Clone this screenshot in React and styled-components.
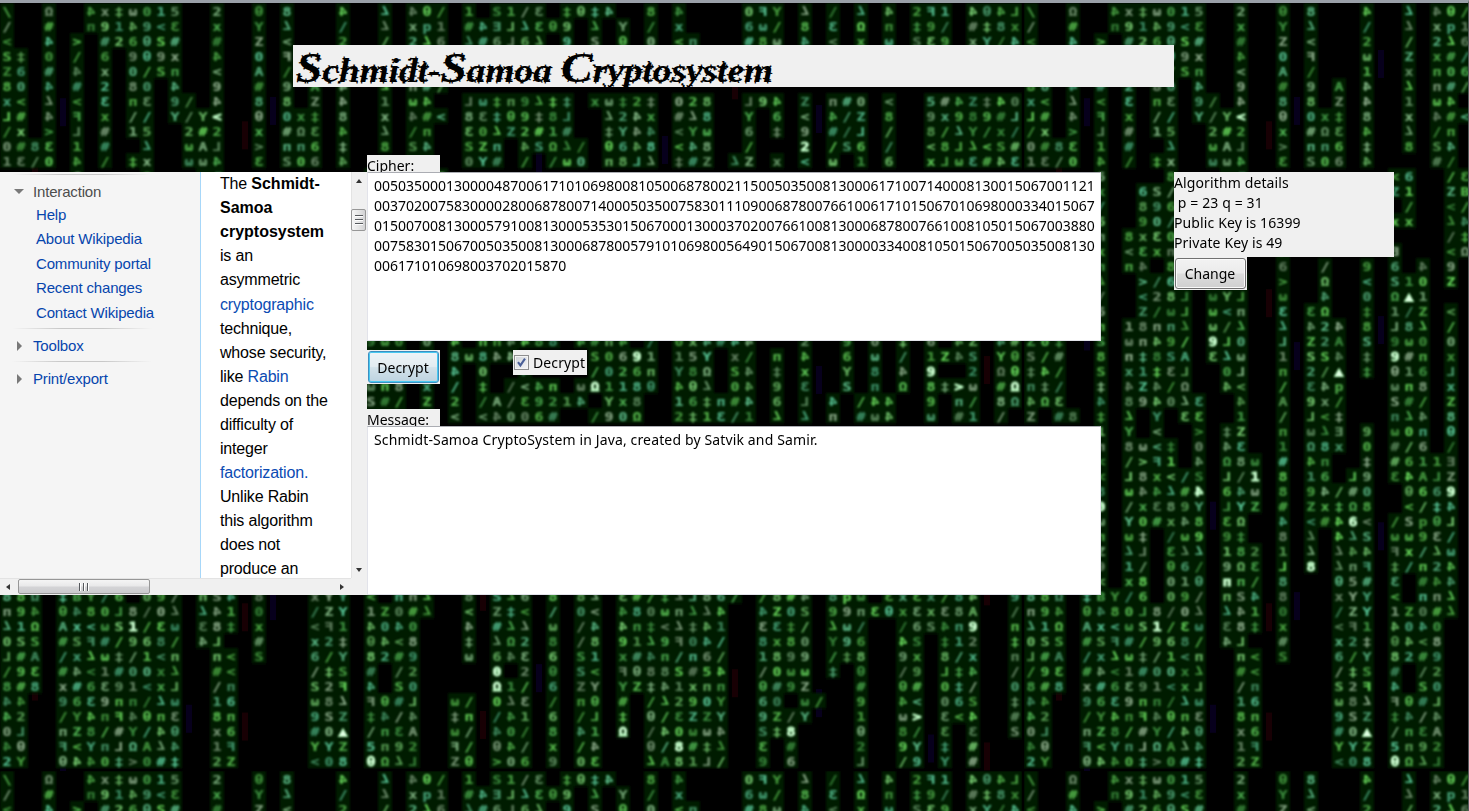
import React from 'react';
import styled, { createGlobalStyle, css } from 'styled-components';

const GlobalStyle = createGlobalStyle`
  html, body { margin: 0; padding: 0; background: #000; overflow: hidden; }
  * { box-sizing: border-box; }
`;

/* ---------- digital rain ---------- */

const PITCH_X = 14;
const PITCH_Y = 15;
const TILE_W = 1024;
const TILE_H = 768;

// One line per row; every entry is "column:glyphs", "." leaves a cell dark,
// "?" lets the cell choose its own glyph.
const RAIN = [
  '0:\\ 3:D 6:4x+o015 15:2 18:@ 20:8 24:4 27:7 29:4@/ 33:1 35:S1/3 40:+@+4 46:8 48:4 53:0FY 57:7 59:/ 61:7 63:4 65:2F1 69:4@4L',
  '0:/ 3:# 6:n9149<3 15:x 18:Y 20:7 24:/ 27:7 29:xq1 33:#4EL73@9 42:7 44:Y 46:/ 48:x 53:6o/ 57:8 59:3 61:D 63:n 65:+9/ 69:#+8x',
  '0:< 3:4 5:> 7:#26@S# 15:# 18:Z 20:< 24:2 27:/ 29:276 33:7#6L67 40:9 42:S 44:@ 46:0 48:<n 53:#8o 57:4 59:< 61:x 63:o 65:S39 69:xY/4',
  '0:S+.0./ 7:6 9:9@9x 15:4 18:0 20:F 24:? 27:? 29:???',
  '0:Z6.#.4 7:x 9:0/Sn 15:< 18:A 20:/ 24:? 27:? 29:???',
  '0:80.4.# 7:2 9:80.4 15:9 18:# 20:9.A 24:4 27:7 29:n#/',
  '0:x<.7.< 7:3 9:n3.9/ 15:4 18:8 20:8.Z.4..1 29:o4 33:Lo+n97++ 42:xo+2+ 48:028 53:L94 57:Z 59:n#0 63:< 66:5#4Z+40',
  '0:L#.4.F 7:x 9://.Y/Y< 18:@ 20:0x+.8..x 29:4#< 33:83+@9+8L 43:724x 48:#78 53:Y.6 57:< 59:4/Z 63:8 66:9x989#L',
  '0:/x.>.L 7:# 9:15 13:2#2 18:x 20:#D3.4..7 29:/n 33:307Z2#1# 43:+Y44 48:<Yo 53:6.+ 57:9 59:#/L 63:/ 66:8/7Y/x/',
  '0:0#?3.1 7:# 10:7 13:oAL 18:> 20:nn6.+..8 29:S4 33:SZn.4SD7/ 43:@648 48:<48 53:/ 57:2 59:/S6 63:/ 66:<8L7<S#',
  '0:13?0.4 7:/ 9:+x 13:oo4 18:3 20:S06.4 29:#/ 33:0Y#./ 39:/o0 43:n8L7 48:+#Z 52:7Z.x.< 59:o.1.6 66:xLo3#43',
  '5:? 10:8 14:?? 26:?6 30:/3',
  '5:? 8:??/ 14:?? 26:Z1 30:ZB',
  '5:? 8:??6 14:?? 26:./ 30:</',
  '5:? 8:??/ 14:?? 26:xx 30:74',
  '5:? 7:???0 18:? 26:. 30:/+',
  '5:? 7:???n? 18:4 26:E 30:<D',
  '5:? 7:??.8 18:6 21:/ 24:9 26:6.? 30:9',
  '5:? 8:>?? 13:??? 18:> 21:D 24:< 26:S10 30:Z',
  '5:? 8:<28L 13:oYL 18:o 21:4 24:0 26:D^1',
  '5:? 8:Z/oL 13:o<n 18:3 20:3D 24:+ 26:1/Z 30:<',
  '5:? 7:18nn7 13:o/7 18:7 20:424 24:8 26:L87 30:/',
  '0:??? 5:? 7:on49/ 13:9L0 18:L 20:Z2A 24:S 26:9o0 30:0 32:4.nn4488 41:4#n4 46:/ 48:0x4# 52:44 57:2 60:9 62:0 64:+ 66:6.4Z 71:4#',
  '0:S/# 5:8 7:n+8SA 13:37o 18:1 20:SS4 24:+ 26:9#n 30:x 32:8o844 42:S0691 48:15Y 52:x/ 55:? 57:4 60:6 62:o 64:/ 66:1Z?S 71:Y@',
  '0:+4/ 5:S 7:x1+3L 14:0L 18:n 20:2/^ 24:+ 26:@16 30:L 32:4.0..4 42:/026n 48:Y8D 52:S4 55:+ 57:x 60:Y 62:8 64:4 66:9..2 71:D@',
  '0:n+/ 5:+ 7:4Z4/D 14:4< 18:/ 20:34q 26:on8 30:x 32:/.+ 36:/<4n 41:oD118@ 48:4@7.04.9 57:3 60:S 62:n 64:D 66:8+>o 71:#D',
  '0:4D3 5:4 7:894073 15:4 18:A 20:9x/ 26:S#/ 30:Z 32:2./A/3921 41:4 43:Yx8 48:16+n#4.6.L.4 61:/44 66:9.n/ 71:8D',
  '0:Z.#8 5:+ 7:7.Y.33 15:1 18:/ 20:L<+ 26:n74 30:8 32:<.<4006# 42:/90D 48:2+13/1.7.7.n.#o4 66:o.#1 71:/',
  '5:? 7:Y.<..> 14:+Z 18:n 20:o7E 24:9 26:o0n 30:@',
  '5:? 7:8o<+.0 14:43 18:1 20:D8x 24:0 26:#/6 30:/',
  '5:? 7:/>F1.4 14:D8o 18:# 20:4n 24:+ 26:#611E',
  '5:? 7:L8x</S 14:L/1 18:8 20:16.L9 26:34ALZ',
  '5:? 7:o447#4 14:64o 18:8 20:94/#0 27:@669',
  '5:0 7:/x389Y 14:LYZ 18:# 20:Zx+D8 27:</+4',
  '5:? 7:Y0#x48 14:3D 18:4 20:<#46< 26:/Sq@L',
  '5:? 7:o+./o9 14:9+ 18:8 20:7.47S 26:oo93/',
  '5:? 7:7L.377 14:182 18:1 20:7 22:744 26:Fx/7o',
  '5:? 7:1/.@6/ 14:9D3 18:L 20:8 22:7nF 26:+/n24',
  '5:< 7:x8.01@ 14:nn/ 18:8 22:@5# 26:3.#44',
  '0:88D 4:+BY/6.09/ 14:nS4 18:8 22:xYY 26:<.nn7 33:8.S76 39:8 41:87 44:3#/+7L86/ 54:/8#4 59:8qo.3x3x/8 69:4 72:9',
  '0:n94 4:@480L8/07 14:741 18:0 22:/ZY 26:1Z0#7 33:<.Z+< 39:/ 41:0< 44:480on774 54:4Z0S 59:99n3@x3x38A 72:/',
  '0:71D 4:Ax<oS1/3o 14:38+ 18:x 22:<F1 26:4040 33:4.#77 39:o 41:/4 44:4n+<7+41 54:33+/ 59:7o/ 64:/6S4n9 72:n',
  '0:0SS 4:#SF#/968/ 14:4L 18:# 22:x2+ 26:@4<8 33:+.7D2 39:8 41:/8 44:9179F04/ 54:8x80 59:Y96 64:4S.+12 72:+',
  '0:L#A 4:/x7o+/1<n 15:n< 18:S 22:6/Y 26:82#9 33:o.643 39:6 41:S1 44:x#4n/n6/ 54:1899 59:/+8 64:9x.8/x 72:n',
  '0:/93 4:#4<1#00x7 15:#< 22:/+S 26:#./2 35:0.2 39:@ 41:S< 44:F@88S#54 54:/0oo 59:+.@ 64:/9.L+4 72:/',
  '0:8#8 4:x#6391<xL 15:/n 22:S2F 26:4.S0 35:D1/ 39:6 41:ZY 44:YZ+41xnn 54:@#9Z 61:# 64:@#.0+/ 72:0',
  '0:44 4:9639nn/7o 15:16 22:o87 26:F@#L 32:o/.073 39:/ 41:n@ 44:#./7290Y 54:60.o/ 61:9 64:4<.06S 72:+',
  '0:42 4:/Y4nF4@n3 15:8n 22:9SZ 26:+4/4 32:+n./41 39:6 41:/L 44:+.@/3ZZY 54:9Z/Y 61:1 64:o>.3<4 72:#',
  '0:0L 4:nZ8/#Y/4@ 15:x6 22:#0^ 26:/n3A 32:o/.40/ 39:8 41:41 44:D./40oo4 54:S+8 61:@ 64:8/.3.3 72:S',
  '0:4@ 4:F<YnLDA74 15:1F 22:YYZ 26:5n92 32:F/.@4/ 39:x 41:/4 46:@/8#+7 54:3.# 61:2 64:9Y.+.#',
  '0:2Y 4:@440+>0#+ 15:2Z 22:<08 26:@D7L 32:Z@.>06 39:9 41:03 46:7A81L/ 54:9.6 61:L 64:/9.Y.#',
];

const BRIGHT = new Set([
  '27-19', '22-24', '26-23', '13-22', '12-32', '30-32', '16-31', '23-34', '14-38', '9-41', '20-37',
  '24-48', '26-50', '44-48', '48-49', '35-44', '35-45', '42-25', '45-23', '57-9', '15-7',
  '69-41', '65-47', '56-48', '68-25', '66-24', '72-25', '5-33',
]);

// Code letters of the table that stand for another sign.
const SIGNS = { '^': '▲', '@': 'θ', n: 'п', '+': '‡', o: 'ω', D: 'Ω' };

const RANDOM_GLYPHS = '4789x/+<no#Z1S603';
const MIRRORED = '34LFqE';
const COLORS = ['#5cc255', '#7fb281', '#66d45a', '#5bb887', '#8cab8a', '#4fb052', '#76c970', '#56c193'];

const noise = (a, b) => {
  let n = (a * 374761393 + b * 668265263) | 0;
  n = Math.imul(n ^ (n >>> 13), 1274126177);
  return ((n ^ (n >>> 16)) >>> 0) / 4294967296;
};

const CELLS = RAIN.flatMap((line, row) =>
  line.split(' ').flatMap((run) => {
    const cut = run.indexOf(':');
    const start = Number(run.slice(0, cut));
    return [...run.slice(cut + 1)].flatMap((ch, i) => {
      if (ch === '.') return [];
      const col = start + i;
      const r = noise(col + 3, row + 11);
      return [{
        col,
        row,
        glyph: ch === '?' ? RANDOM_GLYPHS[Math.floor(r * RANDOM_GLYPHS.length)] : ch,
        bright: BRIGHT.has(`${col}-${row}`),
        color: COLORS[Math.floor(noise(row, col) * COLORS.length)],
        opacity: 0.66 + r * 0.34,
      }];
    });
  })
);

const STREAKS = [2, 4, 13, 17, 19, 25, 34, 38, 47, 52, 58, 66, 70];

const RainLayer = styled.svg`
  position: absolute;
  inset: 0;
  width: 1468px;
  height: 808px;
  user-select: none;
`;

const Glyph = styled.text`
  font: bold 13px 'DejaVu Sans Mono', monospace;
  text-anchor: middle;
`;

const flip = (g) => {
  if (MIRRORED.includes(g)) return 'scale(-1.15,1)';
  return g === '7' ? 'scale(1.15,-1)' : 'scale(1.15,1)';
};

function Rain() {
  return (
    <RainLayer aria-hidden="true" viewBox="0 0 1468 808">
      <defs>
        <filter id="soft" x="0" y="0" width="100%" height="100%">
          <feGaussianBlur stdDeviation="0.85" />
        </filter>
        <filter id="halo" x="0" y="0" width="100%" height="100%">
          <feGaussianBlur stdDeviation="1.8" />
        </filter>
        <clipPath id="tileClip"><rect width={TILE_W} height={TILE_H} /></clipPath>
        <g id="tile" clipPath="url(#tileClip)">
          {STREAKS.map((c, i) => [3, 17, 33, 44].map((r) => (
            <rect
              key={`${c}-${r}`}
              x={c * PITCH_X + 4}
              y={(r + (noise(c, r) * 8)) * PITCH_Y}
              width="6"
              height="28"
              fill={i % 3 === 0 ? '#180004' : '#07001c'}
            />
          )))}
          <g filter="url(#halo)">
            {CELLS.map((c) => (
              <rect key={`${c.col}-${c.row}`} x={c.col * PITCH_X} y={c.row * PITCH_Y} width="14" height="15.5" fill="#001d03" />
            ))}
          </g>
          <g filter="url(#soft)">
            {CELLS.map((c) => (
              <g key={`${c.col}-${c.row}`} transform={`translate(${c.col * PITCH_X + 7},${c.row * PITCH_Y + 8})`}>
                <Glyph
                  transform={flip(c.glyph)}
                  y={c.glyph === '7' ? 5 : 4.7}
                  fill={c.bright ? '#e4ffe6' : c.color}
                  stroke={c.bright ? '#b8ffc0' : c.color}
                  strokeWidth={c.bright ? 0.8 : 0.2}
                  opacity={c.bright ? 1 : c.opacity}
                >
                  {SIGNS[c.glyph] || c.glyph}
                </Glyph>
              </g>
            ))}
          </g>
        </g>
      </defs>
      <rect width="1468" height="808" fill="#000" />
      {[0, 1].map((ty) => [0, 1].map((tx) => (
        <use key={`${tx}${ty}`} href="#tile" x={tx * TILE_W} y={ty * TILE_H} />
      )))}
    </RainLayer>
  );
}

/* ---------- window ---------- */

const UI_FONT = "'Noto Sans', 'Open Sans', sans-serif";

const Window = styled.div`
  position: relative;
  width: 1469px;
  height: 811px;
  overflow: hidden;
  background: #000;
  border-top: 3px solid #9aa0a8;
  border-right: 1px solid #55595c;
  font: 14px/20px ${UI_FONT};
  color: #000;
`;

const Content = styled.main`
  position: relative;
  display: flex;
  flex-direction: column;
  padding-top: 42px;
`;

const Title = styled.h1`
  width: 881px;
  height: 42px;
  margin: 0 0 68px 293px;
  background: #f0f0f0;
`;

const Lettering = styled.svg`
  display: block;
  width: 881px;
  height: 42px;
  text { font: italic bold 33px 'Liberation Serif', serif; }
  .cap { font-size: 42px; }
`;

const Columns = styled.div`
  display: flex;
  align-items: flex-start;
`;

/* ---------- browser pane ---------- */

const Browser = styled.section`
  display: grid;
  grid-template: 406px 17px / 351px 16px;
  width: 367px;
  margin-top: 17px;
  background: #f0f0f0;
  font-family: 'Liberation Sans', Arial, sans-serif;
`;

const Page = styled.div`
  display: flex;
  overflow: hidden;
  background: #fff;
`;

const Sidebar = styled.nav`
  width: 201px;
  padding: 2px 0 0 12px;
  background: #f5f5f5;
  border-right: 1px solid #a7d7f9;
  font-size: 15px;
  letter-spacing: -0.17px;
`;

const Rule = styled.div`
  width: 140px;
  height: 1px;
  background: linear-gradient(to right, #f5f5f5, #c8c8c8 35%, #c8c8c8 65%, #f5f5f5);
`;

const SectionHead = styled.div`
  display: flex;
  align-items: center;
  height: ${(p) => p.$height}px;
  padding-top: ${(p) => (p.$open ? 1 : 2)}px;
  color: ${(p) => (p.$open ? '#4d4d4d' : '#0645ad')};
`;

const Arrow = styled.span`
  width: 21px;
  &::before {
    content: '';
    display: block;
    width: 0;
    height: 0;
    ${(p) => (p.$open
    ? css`margin-left: 2px; border: 5px solid transparent; border-top-color: #797979; border-bottom: 0;`
    : css`margin-left: 5px; border: 5px solid transparent; border-left-color: #797979; border-right: 0;`)}
  }
`;

const Links = styled.ul`
  list-style: none;
  margin: -4px 0 0;
  padding: 0 0 3px 24px;
`;

const LinkItem = styled.li`
  height: 24.4px;
  line-height: 24.4px;
  color: #0645ad;
`;

const Article = styled.article`
  flex: 1;
  padding: 0.3px 0 0 19px;
  font-size: 16px;
  line-height: 24.04px;
  letter-spacing: -0.18px;
  white-space: pre;
  a { color: #0b4bb3; }
  b { letter-spacing: 0; }
`;

const ScrollBar = styled.div`
  display: flex;
  flex-direction: ${(p) => (p.$vertical ? 'column' : 'row')};
  align-items: center;
  background: #f0f0f0;
  ${(p) => (p.$vertical
    ? css`border-left: 1px solid #e3e3e3; padding: 7px 2px 6px 0;`
    : css`border-top: 1px solid #e3e3e3; padding: 0 7px 1px 6px;`)}
`;

const ScrollArrow = styled.i`
  border: 3px solid transparent;
  ${(p) => ({
    up: css`border-top: 0; border-bottom: 4px solid #333;`,
    down: css`border-bottom: 0; border-top: 4px solid #333; margin-top: auto;`,
    left: css`border-left: 0; border-right: 4px solid #333;`,
    right: css`border-right: 0; border-left: 4px solid #333; margin-left: auto;`,
  }[p.$dir])}
`;

const Thumb = styled.div`
  display: flex;
  flex: none;
  align-items: center;
  justify-content: center;
  gap: 2px;
  border: 1px solid #979797;
  border-radius: 2px;
  ${(p) => (p.$vertical
    ? css`
        flex-direction: column; width: 15px; height: 22px; margin-top: 26px;
        background: linear-gradient(to right, #f6f6f6, #e6e6e6 50%, #d2d2d4);
      `
    : css`
        width: 132px; height: 15px; margin-left: 8px;
        background: linear-gradient(#f5f5f5, #e8e8e9 48%, #d4d4d6 52%, #cbcbce);
      `)}
`;

const Grip = styled.span`
  ${(p) => (p.$vertical
    ? css`width: 8px; height: 2px; border-top: 1px solid #55585c; border-bottom: 1px solid #fff;`
    : css`width: 2px; height: 8px; border-left: 1px solid #55585c; border-right: 1px solid #fff;`)}
`;

const ThumbGrip = ({ $vertical }) => (
  <Thumb $vertical={$vertical}>
    {[0, 1, 2].map((i) => <Grip key={i} $vertical={$vertical} />)}
  </Thumb>
);

/* ---------- form ---------- */

const Form = styled.section`
  display: flex;
  flex-direction: column;
  width: 734px;
`;

const FieldLabel = styled.label`
  width: 73px;
  height: 17px;
  overflow: hidden;
  background: #f0f0f0;
  line-height: 22px;
`;

const TextBox = styled.div`
  height: 169px;
  padding: 3px 0 0 6px;
  background: #fff;
  border: 1px solid #e2e3ea;
  border-top-color: #abadb3;
  letter-spacing: ${(p) => p.$spacing}px;
  white-space: pre;
`;

const Actions = styled.div`
  display: flex;
  align-items: flex-start;
  height: 68px;
  padding-top: 9px;
`;

const ButtonFrame = styled.div`
  width: 73px;
  height: ${(p) => p.$height}px;
  padding: 1px;
  background: #f0f0f0;
`;

const Button = styled.button`
  display: block;
  width: 100%;
  height: 100%;
  padding: 1px 1px 0 0;
  border-radius: 3px;
  font: 14px/20px ${UI_FONT};
  color: #000;
  ${(p) => (p.$focused
    ? css`
        border: 1px solid #3c8fc1;
        box-shadow: inset 0 0 0 1px #48c8f0;
        background: linear-gradient(#eef4f8, #e3ecf1 48%, #d3e2ea 52%, #bdd3e0);
      `
    : css`
        border: 1px solid #707070;
        box-shadow: inset 0 0 0 1px #fafafa;
        background: linear-gradient(#f2f2f2, #ebebeb 48%, #dddddd 52%, #cfcfcf);
      `)}
`;

const CheckLabel = styled.div`
  display: flex;
  align-items: center;
  gap: 4px;
  width: 74px;
  height: 25px;
  padding-left: 1px;
  margin-left: 73px;
  background: #f0f0f0;
  letter-spacing: 0.1px;
`;

const CheckBox = styled.span`
  display: flex;
  flex: none;
  width: 15px;
  height: 15px;
  border: 1px solid #8e8f8f;
  background: linear-gradient(135deg, #cfd3d9, #f6f6f6);
  box-shadow: inset 0 0 0 1px #f4f4f4;
`;

const Details = styled.aside`
  margin: 17px 0 0 73px;
`;

const DetailText = styled.div`
  width: 220px;
  height: 85px;
  padding-top: 1px;
  background: #f0f0f0;
  white-space: pre;
  letter-spacing: 0.12px;
`;

const CIPHER = `005035000130000487006171010698008105006878002115005035008130006171007140008130015067001121
003702007583000028006878007140005035007583011109006878007661006171015067010698000334015067
015007008130005791008130005353015067000130003702007661008130006878007661008105015067003880
007583015067005035008130006878005791010698005649015067008130000334008105015067005035008130
006171010698003702015870`;

export default function App() {
  return (
    <Window>
      <GlobalStyle />
      <Rain />
      <Content>
        <Title>
          <Lettering viewBox="0 0 881 42">
            <text
              x="3"
              y="37"
              textLength="477"
              lengthAdjust="spacingAndGlyphs"
              fill="#000"
              stroke="#000"
              strokeWidth="3"
              strokeDasharray="1.1 5.6"
            >
              <tspan className="cap">S</tspan>chmidt-<tspan className="cap">S</tspan>amoa <tspan className="cap">C</tspan>ryptosystem
            </text>
          </Lettering>
        </Title>
        <Columns>
          <Browser>
            <Page>
              <Sidebar>
                <Rule />
                <SectionHead $open $height={32}><Arrow $open />Interaction</SectionHead>
                <Links>
                  {['Help', 'About Wikipedia', 'Community portal', 'Recent changes', 'Contact Wikipedia'].map((t) => (
                    <LinkItem key={t}>{t}</LinkItem>
                  ))}
                </Links>
                <Rule />
                <SectionHead $height={32}><Arrow />Toolbox</SectionHead>
                <Rule />
                <SectionHead $height={33}><Arrow />Print/export</SectionHead>
              </Sidebar>
              <Article>
                The <b>Schmidt-{'\n'}Samoa{'\n'}cryptosystem</b>{'\n'}
                is an{'\n'}asymmetric{'\n'}<a>cryptographic</a>{'\n'}technique,{'\n'}whose security,{'\n'}
                like <a>Rabin</a>{'\n'}depends on the{'\n'}difficulty of{'\n'}integer{'\n'}<a>factorization.</a>{'\n'}
                Unlike Rabin{'\n'}this algorithm{'\n'}does not{'\n'}produce an
              </Article>
            </Page>
            <ScrollBar $vertical>
              <ScrollArrow $dir="up" />
              <ThumbGrip $vertical />
              <ScrollArrow $dir="down" />
            </ScrollBar>
            <ScrollBar>
              <ScrollArrow $dir="left" />
              <ThumbGrip />
              <ScrollArrow $dir="right" />
            </ScrollBar>
          </Browser>
          <Form>
            <FieldLabel>Cipher:</FieldLabel>
            <TextBox $spacing={0}>{CIPHER}</TextBox>
            <Actions>
              <ButtonFrame $height={34}><Button $focused>Decrypt</Button></ButtonFrame>
              <CheckLabel>
                <CheckBox>
                  <svg width="13" height="13" viewBox="0 0 13 13">
                    <path d="M3 6.2 L5.4 9.4 L10 2.6" fill="none" stroke="#4a5f97" strokeWidth="2.1" />
                  </svg>
                </CheckBox>
                Decrypt
              </CheckLabel>
            </Actions>
            <FieldLabel>Message:</FieldLabel>
            <TextBox $spacing={0.14}>Schmidt-Samoa CryptoSystem in Java, created by Satvik and Samir.</TextBox>
          </Form>
          <Details>
            <DetailText>{'Algorithm details\n p = 23 q = 31\nPublic Key is 16399\nPrivate Key is 49'}</DetailText>
            <ButtonFrame $height={33}><Button>Change</Button></ButtonFrame>
          </Details>
        </Columns>
      </Content>
    </Window>
  );
}
